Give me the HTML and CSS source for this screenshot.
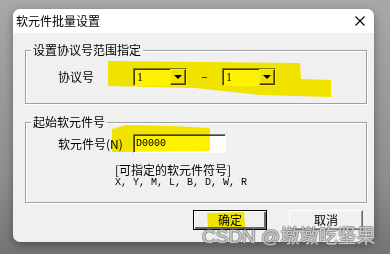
FILE: index.html
```html
<!DOCTYPE html>
<html lang="zh-CN">
<head>
    <meta charset="UTF-8">
    <meta name="viewport" content="width=device-width, initial-scale=1.0">
    <title>软元件批量设置</title>
    <link rel="stylesheet" href="styles.css">
</head>
<body>
    <div class="dialog">
        <div class="titlebar">
            <span class="title">软元件批量设置</span>
            <svg class="close" width="10" height="10" viewBox="0 0 10 10">
                <path d="M0.5 0.5 L9.5 9.5 M9.5 0.5 L0.5 9.5" stroke="#000" stroke-width="1.1" fill="none"/>
            </svg>
        </div>
        <div class="content">
            <fieldset class="group range">
                <legend>设置协议号范围指定</legend>
                <div class="row">
                    <span class="label">协议号</span>
                    <div class="combo">
                        <span class="combo-value">1</span>
                        <span class="combo-btn"><i class="arrow"></i></span>
                    </div>
                    <span class="dash">–</span>
                    <div class="combo">
                        <span class="combo-value">1</span>
                        <span class="combo-btn"><i class="arrow"></i></span>
                    </div>
                </div>
            </fieldset>

            <fieldset class="group start">
                <legend>起始软元件号</legend>
                <div class="row">
                    <span class="label">软元件号(N)</span>
                    <div class="field">D0000</div>
                </div>
                <div class="hint">[可指定的软元件符号]</div>
                <div class="codes">X, Y, M, L, B, D, W, R</div>
            </fieldset>

            <div class="actions">
                <button class="btn default">确定</button>
                <button class="btn">取消</button>
            </div>
        </div>
    </div>

    <!-- highlighter strokes over the screenshot -->
    <svg class="marker" width="390" height="254" viewBox="0 0 390 254">
        <polygon points="108,61 300,63 301,79 331,80 331,97 260,95 195,88 108,86" fill="#fff200"/>
        <polygon points="112,129 126,125 170,126 210,128 210,151 112,152" fill="#fff200"/>
        <polygon points="207,213 244,212 245,228 208,228" fill="#fff200"/>
    </svg>

    <div class="watermark">CSDN @墩墩吃坚果</div>
</body>
</html>
```

FILE: styles.css
```css
body{
    margin: 0;
    width: 390px;
    height: 254px;
    overflow: hidden;
    position: relative;
    background: linear-gradient(to bottom, #a8a8a8, #8e8e8e 70%, #747474);
    font-family: "Noto Sans CJK SC", "Noto Sans", sans-serif;
    font-size: 12px;
    color: #000;
}

.dialog{
    position: relative;
    margin: 9px 0 0 13px;
    width: 361px;
    height: 233px;
    background: #f0f0f0;
    border-radius: 7px;
    overflow: hidden;
    box-shadow: 0 3px 10px rgba(0, 0, 0, 0.35);
}

.titlebar{
    height: 24px;
    background: #fff;
    display: flex;
    align-items: center;
    justify-content: space-between;
    padding: 0 9px 0 3px;
}
.title{
    font-size: 12px;
    line-height: 14px;
}
.close{
    display: block;
}

.content{
    padding: 10px 7px 0 12px;
}

.group{
    box-sizing: border-box;
    margin: 0;
    padding: 0;
    width: 342px;
    border: 1px solid #a0a0a0;
    box-shadow: inset 1px 1px #fff, 1px 1px #fff;
    min-width: 0;
}
.group legend{
    margin-left: 5px;
    padding: 0 2px;
    line-height: 14px;
    background: #f0f0f0;
}
.range{
    height: 61px;
}
.start{
    height: 88px;
    margin-top: 11px;
}

.row{
    display: flex;
    align-items: center;
    padding-left: 32px;
}
.range .row{
    padding-top: 11px;
}
.start .row{
    padding-top: 5px;
}
.label{
    width: 75px;
    line-height: 14px;
}
.dash{
    width: 35px;
    text-align: center;
    margin-top: -3px;
}

.combo{
    box-sizing: border-box;
    width: 54px;
    height: 18px;
    display: flex;
    background: #fff;
    border: 1px solid;
    border-color: #808080 #fff #fff #808080;
    box-shadow: inset 1px 1px #404040;
}
.combo-value{
    flex: 1;
    padding: 1px 0 0 3px;
    font-family: "Liberation Serif", serif;
    font-size: 12px;
    line-height: 15px;
}
.combo-btn{
    box-sizing: border-box;
    width: 16px;
    display: flex;
    align-items: center;
    justify-content: center;
    background: #f0f0f0;
    border: 1px solid;
    border-color: #fff #404040 #404040 #fff;
    box-shadow: inset -1px -1px #808080;
}
.arrow{
    width: 0;
    height: 0;
    border-left: 4px solid transparent;
    border-right: 4px solid transparent;
    border-top: 4px solid #000;
}

.field{
    box-sizing: border-box;
    width: 93px;
    height: 19px;
    background: #fff;
    border: 1px solid;
    border-color: #808080 #fff #fff #808080;
    box-shadow: inset 1px 1px #404040;
    padding: 2px 0 0 2px;
    font-family: "Liberation Mono", monospace;
    font-size: 10px;
    line-height: 14px;
}

.hint{
    margin: 10px 0 0 89px;
    line-height: 14px;
}
.codes{
    margin-left: 89px;
    font-family: "Liberation Mono", monospace;
    font-size: 10px;
    line-height: 12px;
}

.actions{
    display: flex;
    justify-content: flex-end;
    gap: 22px;
    margin-top: 7px;
    padding-right: 4px;
}
.btn{
    box-sizing: border-box;
    width: 74px;
    height: 20px;
    padding: 0;
    font-family: inherit;
    font-size: 12px;
    line-height: 14px;
    background: #f0f0f0;
    border: 1px solid;
    border-color: #fff #696969 #696969 #fff;
    box-shadow: inset -1px -1px #a0a0a0;
}
.btn.default{
    border: 1px solid #000;
    box-shadow: inset 1px 1px #fff, inset -2px -2px #696969;
}

.marker{
    position: absolute;
    left: 0;
    top: 0;
    pointer-events: none;
    mix-blend-mode: multiply;
}

.watermark{
    position: absolute;
    left: 202px;
    top: 226px;
    font-family: "Liberation Sans", "Noto Sans CJK SC", sans-serif;
    font-size: 19px;
    line-height: 22px;
    white-space: nowrap;
    color: rgba(255, 255, 255, 0.6);
    text-shadow: 1px 0 0 rgba(110, 110, 110, 0.6), -1px 0 0 rgba(110, 110, 110, 0.6),
                 0 1px 0 rgba(110, 110, 110, 0.6), 0 -1px 0 rgba(110, 110, 110, 0.6);
}
```
